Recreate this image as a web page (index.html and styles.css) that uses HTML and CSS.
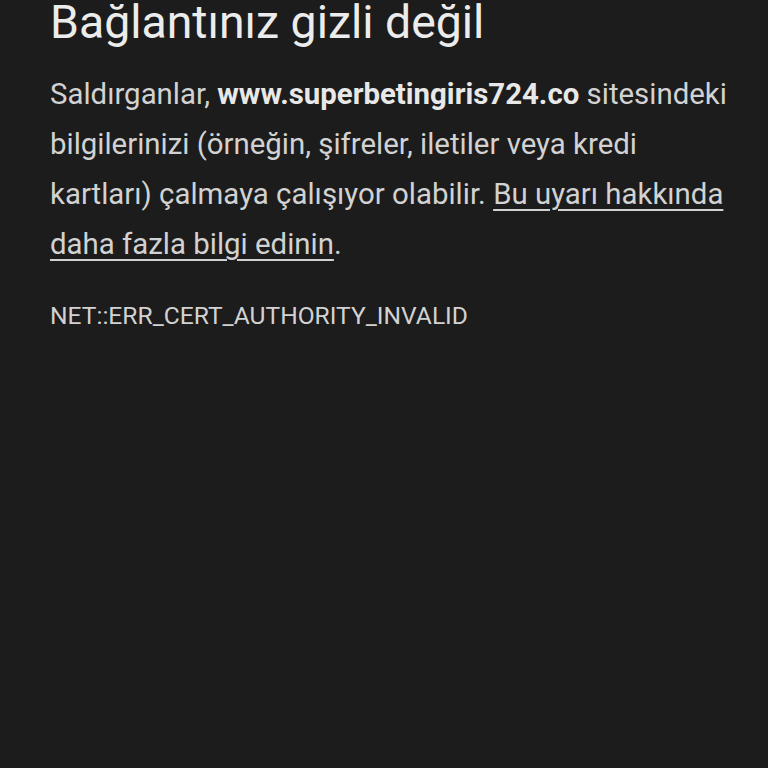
FILE: index.html
```html
<!DOCTYPE html>
<html lang="tr">
<head>
<meta charset="utf-8">
<link rel="stylesheet" href="styles.css">
</head>
<body>
<main class="page">
  <h1 class="title">Bağlantınız gizli değil</h1>
  <p class="message">Saldırganlar, <strong>www.superbetingiris724.co</strong> sitesindeki bilgilerinizi (örneğin, şifreler, iletiler veya kredi kartları) çalmaya çalışıyor olabilir. <a class="link" href="#">Bu uyarı hakkında daha fazla bilgi edinin</a>.</p>
  <p class="code">NET::ERR_CERT_AUTHORITY_INVALID</p>
</main>
</body>
</html>
```

FILE: styles.css
```css
html, body {
  margin: 0;
  padding: 0;
  background: #1c1c1c;
  height: 100%;
}
.page {
  padding: 0 34px 0 50px;
  font-family: Roboto, "Noto Sans", sans-serif;
}
.title {
  margin: -4px 0 0 0;
  font-size: 46.4px;
  font-weight: 400;
  line-height: 52px;
  color: #ececec;
}
.message {
  margin: 21px 0 0 0;
  font-size: 29.4px;
  line-height: 50px;
  color: #d2d2d2;
}
.message strong {
  font-weight: 700;
  color: #e8e8e8;
}
.link {
  color: #d2d2d2;
  text-decoration: underline;
  text-decoration-thickness: 2px;
  text-underline-offset: 5px;
}
.code {
  margin: 32px 0 0 0;
  font-size: 24.6px;
  line-height: 30px;
  color: #d2d2d2;
}
```
